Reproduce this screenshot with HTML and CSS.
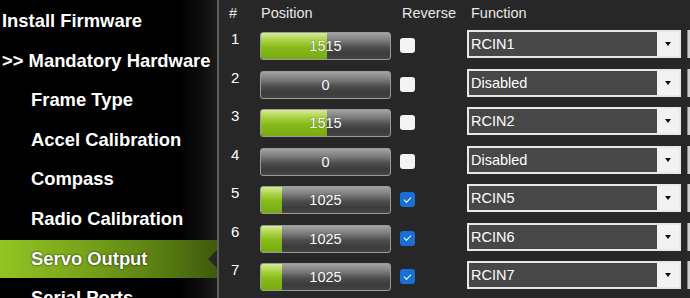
FILE: index.html
```html
<!DOCTYPE html>
<html>
<head>
  <title>Servo Output</title>
  <link rel="stylesheet" href="styles.css">
</head>
<body>
<div class="app">
    <nav class="side">
        <div class="item">Install Firmware</div>
        <div class="item">&gt;&gt; Mandatory Hardware</div>
        <div class="item sub">Frame Type</div>
        <div class="item sub">Accel Calibration</div>
        <div class="item sub">Compass</div>
        <div class="item sub">Radio Calibration</div>
        <div class="item sub active">Servo Output</div>
        <div class="item sub">Serial Ports</div>
    </nav>
    <div class="panel">
        <div class="row head">
            <span class="h-num">#</span>
            <span class="h-pos">Position</span>
            <span class="h-rev">Reverse</span>
            <span class="h-fn">Function</span>
        </div>
        <div class="row">
            <span class="num">1</span>
            <div class="bar"><div class="fill" style="width: 51%"></div><span>1515</span></div>
            <span class="check"></span>
            <div class="combo"><span>RCIN1</span><i class="drop"></i></div>
            <div class="extra"></div>
        </div>
        <div class="row">
            <span class="num">2</span>
            <div class="bar"><div class="fill" style="width: 0%"></div><span>0</span></div>
            <span class="check"></span>
            <div class="combo"><span>Disabled</span><i class="drop"></i></div>
            <div class="extra"></div>
        </div>
        <div class="row">
            <span class="num">3</span>
            <div class="bar"><div class="fill" style="width: 51%"></div><span>1515</span></div>
            <span class="check"></span>
            <div class="combo"><span>RCIN2</span><i class="drop"></i></div>
            <div class="extra"></div>
        </div>
        <div class="row">
            <span class="num">4</span>
            <div class="bar"><div class="fill" style="width: 0%"></div><span>0</span></div>
            <span class="check"></span>
            <div class="combo"><span>Disabled</span><i class="drop"></i></div>
            <div class="extra"></div>
        </div>
        <div class="row">
            <span class="num">5</span>
            <div class="bar"><div class="fill" style="width: 16%"></div><span>1025</span></div>
            <span class="check on"></span>
            <div class="combo"><span>RCIN5</span><i class="drop"></i></div>
            <div class="extra"></div>
        </div>
        <div class="row">
            <span class="num">6</span>
            <div class="bar"><div class="fill" style="width: 16%"></div><span>1025</span></div>
            <span class="check on"></span>
            <div class="combo"><span>RCIN6</span><i class="drop"></i></div>
            <div class="extra"></div>
        </div>
        <div class="row">
            <span class="num">7</span>
            <div class="bar"><div class="fill" style="width: 16%"></div><span>1025</span></div>
            <span class="check on"></span>
            <div class="combo"><span>RCIN7</span><i class="drop"></i></div>
            <div class="extra"></div>
        </div>
    </div>
</div>
</body>
</html>
```

FILE: styles.css
```css
html, body {
    margin: 0;
    height: 100%;
    width: 100%;
    overflow: hidden;
}
body {
    background: #272727;
    font-family: "Liberation Sans", Arial, sans-serif;
}
.app {
    display: flex;
    height: 100%;
}
.side {
    width: 219px;
    flex-shrink: 0;
    padding-top: 1px;
    box-sizing: border-box;
    background: linear-gradient(to right, #000 82%, #0c0c0c 92%, #1c1c1c 100%);
    border-right: 2px solid #5e5e5e;
}
.item {
    position: relative;
    height: 39.6px;
    line-height: 39.6px;
    padding-left: 2px;
    font-size: 18.4px;
    font-weight: bold;
    color: #fff;
    white-space: nowrap;
    text-shadow: 0 0 2px #000;
}
.item.sub {
    padding-left: 31px;
}
.item.active {
    margin-top: 1px;
    height: 38.6px;
    line-height: 38px;
    background: linear-gradient(to right, #93c423 0%, #7aa71a 35%, #587c12 75%, #3f5a0c 100%);
}
.item.active::after {
    content: "";
    position: absolute;
    right: 0;
    top: 10px;
    border-style: solid;
    border-width: 9px 9px 9px 0;
    border-color: transparent #272727 transparent transparent;
}
.panel {
    flex-grow: 1;
    padding-left: 10px;
    color: #e8e8e8;
    font-size: 14.5px;
}
.row {
    display: grid;
    grid-template-columns: 31px 140px 67px 214px 46px;
    align-items: start;
    height: 38.5px;
}
.row.head {
    height: 30px;
    line-height: 17px;
    padding-top: 5px;
    box-sizing: border-box;
}
.h-pos {
    padding-left: 1px;
}
.h-rev {
    padding-left: 2px;
}
.h-fn {
    padding-left: 4px;
}
.num {
    padding-left: 2px;
    font-size: 15px;
    line-height: 17px;
    color: #fff;
}
.bar {
    position: relative;
    width: 131px;
    height: 28px;
    margin-top: 2px;
    box-sizing: border-box;
    border: 1px solid #9b9b9b;
    border-radius: 3px;
    overflow: hidden;
    background: linear-gradient(to bottom, #a3a3a3 0%, #7a7a7a 30%, #4d4d4d 55%, #3b3b3b 80%, #454545 100%);
}
.fill {
    position: absolute;
    left: 0;
    top: 0;
    bottom: 0;
    background: linear-gradient(to bottom, #d4ec98 0%, #a8d040 30%, #86bb1a 55%, #78ab12 100%);
}
.bar span {
    position: relative;
    display: block;
    text-align: center;
    line-height: 27px;
    color: #fff;
    text-shadow: 0 0 1px #333;
}
.check {
    width: 15px;
    height: 15px;
    margin-top: 8px;
    border-radius: 3px;
    background: #f4f4f4;
    box-sizing: border-box;
    display: flex;
    align-items: center;
    justify-content: center;
}
.check.on {
    background: #1a6fd4;
}
.check.on::after {
    content: "";
    width: 6px;
    height: 3px;
    margin-top: -2px;
    border-left: 1.5px solid #fff;
    border-bottom: 1.5px solid #fff;
    transform: rotate(-45deg);
}
.combo {
    display: flex;
    height: 28px;
    box-sizing: border-box;
    border: 2px solid #e8e8e8;
    background: #474747;
}
.combo span {
    flex-grow: 1;
    padding-left: 2px;
    line-height: 24px;
    color: #fff;
}
.drop {
    width: 22px;
    background: #f2f2f2;
    display: flex;
    align-items: center;
    justify-content: center;
}
.drop::after {
    content: "";
    border-style: solid;
    border-width: 4px 3.5px 0 3.5px;
    border-color: #111 transparent transparent transparent;
}
.extra {
    margin-left: 6px;
    width: 40px;
    height: 28px;
    box-sizing: border-box;
    border-left: 1px solid #8a8a8a;
    background: #cdcdcd;
}
```
